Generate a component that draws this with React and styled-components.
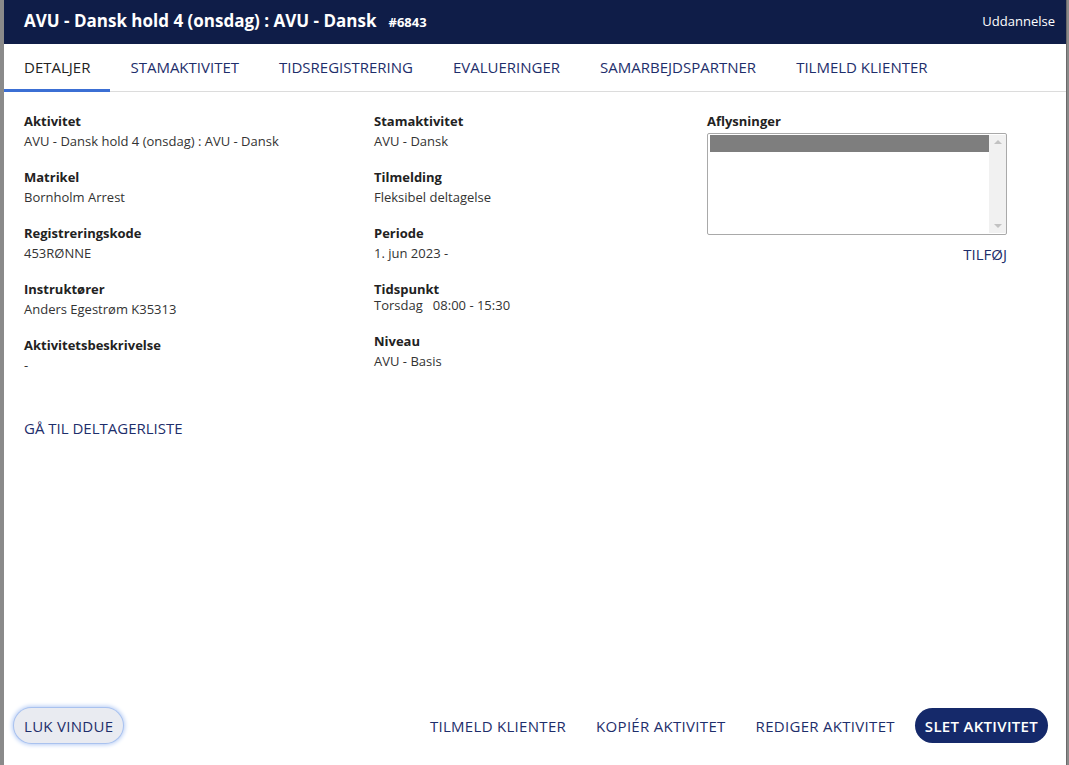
import React from "react";
import styled, { createGlobalStyle } from "styled-components";

const Global = createGlobalStyle`
  html, body { margin: 0; padding: 0; height: 100%; }
  body {
    background: #8a8a8a;
    font-family: "Open Sans", "Liberation Sans", sans-serif;
    overflow: hidden;
  }
  #root { height: 765px; }
`;

const Backdrop = styled.div`
  height: 765px;
  display: flex;
  padding-left: 4px;
  padding-right: 2px;
`;

const Modal = styled.div`
  flex: 1;
  background: #fff;
  display: flex;
  flex-direction: column;
  border-right: 1px solid #6a6a6a;
`;

const Header = styled.div`
  height: 44px;
  box-sizing: border-box;
  background: #0f1d48;
  color: #fff;
  display: flex;
  align-items: center;
  padding: 0 11px 3px 20px;
`;

const Title = styled.h1`
  margin: 0;
  font-size: 17px;
  font-weight: 700;
  flex: 1;
  display: flex;
  align-items: baseline;
  gap: 12px;
`;

const Code = styled.span`
  font-size: 13px;
  font-weight: 700;
`;

const Area = styled.span`
  font-size: 13px;
`;

const Tabs = styled.nav`
  display: flex;
  height: 47px;
  border-bottom: 1px solid #dcdcdc;
`;

const Tab = styled.div`
  padding: 0 20px;
  display: flex;
  align-items: center;
  font-size: 15px;
  text-transform: uppercase;
  color: ${(p) => (p.$active ? "#222" : "#1e2e6b")};
  border-bottom: 3px solid ${(p) => (p.$active ? "#3b6fd4" : "transparent")};
  margin-bottom: -1px;
  padding-top: 1px;
`;

const Body = styled.div`
  flex: 1;
  padding: 21px 20px 0;
  display: flex;
  flex-direction: column;
`;

const Columns = styled.div`
  display: grid;
  grid-template-columns: 350px 333px 300px;
`;

const Col = styled.div`
  display: flex;
  flex-direction: column;
`;

const Field = styled.div`
  display: flex;
  flex-direction: column;
  gap: ${(p) => (p.$tight ? "0px" : "3px")};
  margin-bottom: 19px;
`;

const Label = styled.div`
  font-size: 13px;
  font-weight: 700;
  color: #222;
  line-height: 17px;
`;

const Value = styled.div`
  font-size: 13px;
  color: #333;
  line-height: 17px;
  min-height: 17px;
  white-space: pre;
  margin-top: ${(p) => (p.$tight ? "-1px" : "0")};
`;

const ListBox = styled.div`
  margin-top: 3px;
  height: 98px;
  border: 1px solid #a9a9a9;
  border-radius: 2px;
  display: flex;
  padding: 1px 0 1px 2px;
`;

const ListItems = styled.div`
  flex: 1;
`;

const SelectedRow = styled.div`
  height: 17px;
  background: #7e7e7e;
`;

const Scrollbar = styled.div`
  width: 17px;
  background: #f1f1f1;
  display: flex;
  flex-direction: column;
  justify-content: space-between;
  align-items: center;
  padding: 5px 0;
`;

const Arrow = styled.div`
  width: 0;
  height: 0;
  border-left: 4px solid transparent;
  border-right: 4px solid transparent;
  ${(p) =>
    p.$up
      ? "border-bottom: 4px solid #c2c2c2;"
      : "border-top: 4px solid #c2c2c2;"}
`;

const LinkRow = styled.div`
  display: flex;
  justify-content: flex-end;
  margin-top: 9px;
`;

const TextLink = styled.a`
  font-size: 15px;
  color: #1e2e6b;
  text-transform: uppercase;
  cursor: pointer;
  text-decoration: none;
`;

const ListLink = styled(TextLink)`
  margin-top: 25px;
  align-self: flex-start;
`;

const Footer = styled.div`
  display: flex;
  align-items: center;
  padding: 0 18px 22px 9px;
  gap: 10px;
`;

const Spacer = styled.div`
  flex: 1;
`;

const Button = styled.button`
  font-family: inherit;
  font-size: 15px;
  letter-spacing: 0.3px;
  text-transform: uppercase;
  border: none;
  border-radius: 18px;
  height: 35px;
  padding: 0 10px;
  cursor: pointer;
  background: ${(p) =>
    p.$solid ? "#15296a" : p.$focus ? "#e9ebf1" : "transparent"};
  color: ${(p) => (p.$solid ? "#fff" : "#1e2e6b")};
  font-weight: ${(p) => (p.$solid ? 600 : 400)};
  box-shadow: ${(p) =>
    p.$focus ? "0 0 0 1px #a9c2ef, 0 0 4px 2px #b7cdf5" : "none"};
  margin-left: ${(p) => (p.$focus ? "1px" : "0")};
`;

const left = [
  ["Aktivitet", "AVU - Dansk hold 4 (onsdag) : AVU - Dansk"],
  ["Matrikel", "Bornholm Arrest"],
  ["Registreringskode", "453RØNNE"],
  ["Instruktører", "Anders Egestrøm K35313"],
  ["Aktivitetsbeskrivelse", "-"],
];

const mid = [
  ["Stamaktivitet", "AVU - Dansk"],
  ["Tilmelding", "Fleksibel deltagelse"],
  ["Periode", "1. jun 2023 -"],
  ["Tidspunkt", "Torsdag   08:00 - 15:30", true],
  ["Niveau", "AVU - Basis"],
];

const tabs = [
  "Detaljer",
  "Stamaktivitet",
  "Tidsregistrering",
  "Evalueringer",
  "Samarbejdspartner",
  "Tilmeld klienter",
];

export default function App() {
  return (
    <>
      <Global />
      <Backdrop>
        <Modal>
          <Header>
            <Title>
              AVU - Dansk hold 4 (onsdag) : AVU - Dansk <Code>#6843</Code>
            </Title>
            <Area>Uddannelse</Area>
          </Header>
          <Tabs>
            {tabs.map((t, i) => (
              <Tab key={t} $active={i === 0}>
                {t}
              </Tab>
            ))}
          </Tabs>
          <Body>
            <Columns>
              <Col>
                {left.map(([l, v]) => (
                  <Field key={l}>
                    <Label>{l}</Label>
                    <Value>{v}</Value>
                  </Field>
                ))}
              </Col>
              <Col>
                {mid.map(([l, v, tight]) => (
                  <Field key={l} $tight={tight}>
                    <Label>{l}</Label>
                    <Value $tight={tight}>{v}</Value>
                  </Field>
                ))}
              </Col>
              <Col>
                <Label>Aflysninger</Label>
                <ListBox>
                  <ListItems>
                    <SelectedRow />
                  </ListItems>
                  <Scrollbar>
                    <Arrow $up />
                    <Arrow />
                  </Scrollbar>
                </ListBox>
                <LinkRow>
                  <TextLink>Tilføj</TextLink>
                </LinkRow>
              </Col>
            </Columns>
            <ListLink>Gå til deltagerliste</ListLink>
          </Body>
          <Footer>
            <Button $focus>Luk vindue</Button>
            <Spacer />
            <Button>Tilmeld klienter</Button>
            <Button>Kopiér aktivitet</Button>
            <Button>Rediger aktivitet</Button>
            <Button $solid>Slet aktivitet</Button>
          </Footer>
        </Modal>
      </Backdrop>
    </>
  );
}
